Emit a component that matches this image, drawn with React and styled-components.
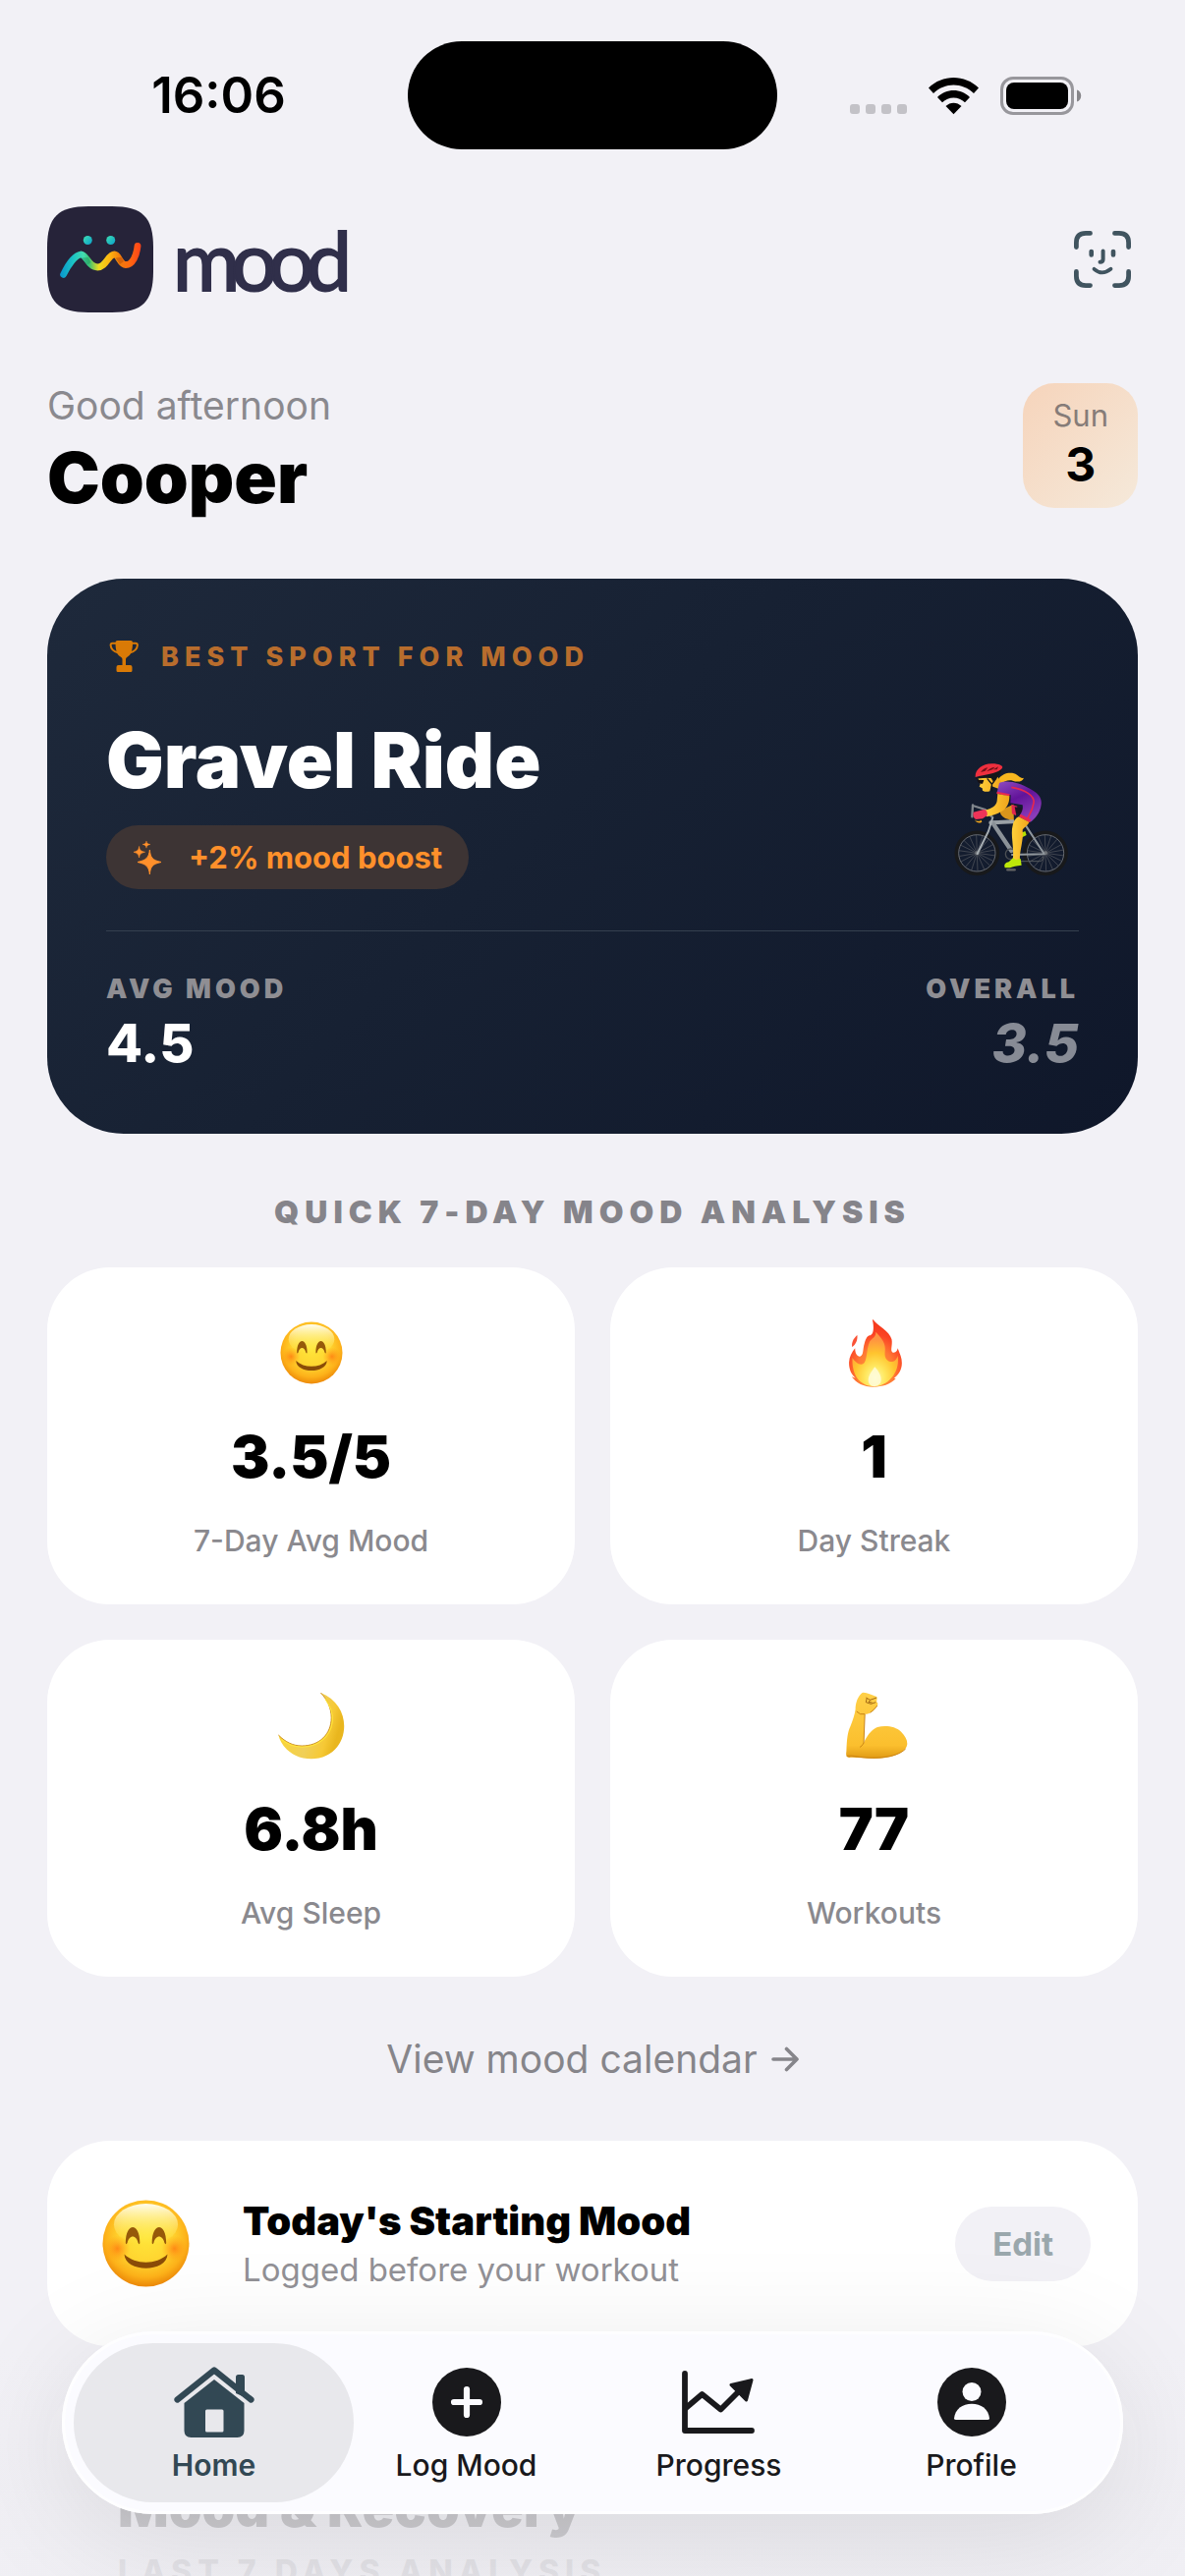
import React from "react";
import styled, { createGlobalStyle } from "styled-components";

const GlobalStyle = createGlobalStyle`
  *, *::before, *::after { box-sizing: border-box; }
  html, body { margin: 0; background: #f2f1f6; }
  body { font-family: Inter, "Liberation Sans", sans-serif; color: #000; }
  button { font: inherit; border: 0; background: none; padding: 0; cursor: pointer; }
  a { text-decoration: none; }
  h1, h2, h3, p, dl, dt, dd { margin: 0; font-weight: inherit; font-size: inherit; }
  svg { display: block; flex: none; }
`;

const Screen = styled.div`
  position: relative;
  height: 100vh;
  overflow: hidden;
  background: #f2f1f6;
`;

const StatusBar = styled.div`
  display: grid;
  grid-template-columns: 1fr 376px 1fr;
  align-items: center;
  padding-top: 42px;
`;

const Clock = styled.time`
  padding-left: 30px;
  text-align: center;
  font-size: 51px;
  line-height: 60px;
  font-weight: 600;
`;

const Island = styled.div`
  height: 110px;
  border-radius: 55px;
  background: #000;
`;

const StatusIcons = styled.div`
  display: flex;
  justify-content: center;
  align-items: center;
  gap: 22px;
  padding-right: 32px;
`;

const Main = styled.main`
  padding: 58px 48px 0;
`;

const TopBar = styled.header`
  display: flex;
  align-items: center;
  justify-content: space-between;
`;

const Brand = styled.div`
  display: flex;
  align-items: center;
  gap: 20px;
`;

const Wordmark = styled.span`
  font-family: Lato, "Liberation Sans", sans-serif;
  font-size: 83px;
  line-height: 108px;
  letter-spacing: -9px;
  color: #302f4a;
  -webkit-text-stroke: 2px #302f4a;
`;

const ScanButton = styled.button`
  display: grid;
  place-items: center;
  width: 72px;
  height: 72px;
`;

const Greeting = styled.section`
  display: flex;
  align-items: flex-start;
  justify-content: space-between;
  margin-top: 72px;
`;

const Hello = styled.p`
  font-size: 39px;
  line-height: 46px;
  color: #8a898e;
  && { margin-bottom: 8px; }
`;

const Name = styled.h1`
  && { font-size: 72px; font-weight: 900; }
  line-height: 84px;
`;

const DateTile = styled.div`
  display: flex;
  flex-direction: column;
  align-items: center;
  padding: 15px 30px;
  border-radius: 32px;
  background: linear-gradient(135deg, #f6d4bb, #f5e9da);
`;

const Weekday = styled.span`
  font-size: 31px;
  line-height: 36px;
  color: #867c78;
`;

const DayNumber = styled.span`
  font-size: 48px;
  line-height: 58px;
  font-weight: 700;
  margin-top: 3px;
`;

const Hero = styled.section`
  margin-top: 61px;
  padding: 60px;
  border-radius: 78px;
  background: linear-gradient(135deg, #1e293b, #172133 45%, #0f172a);
  color: #fff;
`;

const Eyebrow = styled.div`
  display: flex;
  align-items: center;
  gap: 20px;
  height: 38px;
  font-size: 27px;
  font-weight: 800;
  letter-spacing: 6px;
  color: #b86d2d;
`;

const HeroBody = styled.div`
  display: flex;
  justify-content: space-between;
  align-items: flex-end;
  margin-top: 42px;
  padding-bottom: 42px;
  border-bottom: 1px solid #35404f;
`;

const SportName = styled.h2`
  && { font-size: 78px; font-weight: 900; }
  line-height: 90px;
`;

const Boost = styled.div`
  display: inline-flex;
  align-items: center;
  gap: 27px;
  height: 65px;
  margin-top: 21px;
  padding: 0 27px;
  border-radius: 33px;
  background: #3d3434;
  color: #ff902b;
  font-size: 31px;
  font-weight: 700;
`;

const HeroStats = styled.dl`
  && { margin-top: 42px; }
  display: flex;
  justify-content: space-between;
`;

const HeroStat = styled.div`
  text-align: ${(p) => (p.$end ? "right" : "left")};

  dt {
    font-size: 27px;
    line-height: 34px;
    font-weight: 900;
    letter-spacing: 4px;
    color: #8f8e93;
  }

  dd {
    margin-top: 6px;
    font-size: 54px;
    line-height: 64px;
    font-weight: 800;
    font-style: ${(p) => (p.$end ? "italic" : "normal")};
    color: ${(p) => (p.$end ? "#878b95" : "#fff")};
  }
`;

const SectionTitle = styled.h2`
  && { font-size: 32px; font-weight: 900; margin: 60px 0 36px; }
  line-height: 40px;
  letter-spacing: 6px;
  text-align: center;
  color: #85848a;
`;

const StatGrid = styled.div`
  display: grid;
  grid-template-columns: 1fr 1fr;
  gap: 36px;
`;

const StatCard = styled.article`
  display: flex;
  flex-direction: column;
  align-items: center;
  gap: 30px;
  padding: 48px 24px 47px;
  border-radius: 64px;
  background: #fff;
`;

const StatValue = styled.strong`
  font-size: 59px;
  line-height: 74px;
  font-weight: 900;
`;

const StatLabel = styled.span`
  font-size: 30px;
  line-height: 36px;
  font-weight: 500;
  color: #8a898e;
`;

const CalendarLink = styled.a`
  display: flex;
  justify-content: center;
  align-items: center;
  gap: 14px;
  margin: 60px 0;
  font-size: 39px;
  line-height: 47px;
  color: #86858a;
`;

const TodayCard = styled.section`
  display: flex;
  align-items: center;
  gap: 46px;
  padding: 52px 48px;
  border-radius: 64px;
  background: #fff;
`;

const TodayText = styled.div`
  flex: 1;

  h3 {
    font-size: 40px;
    line-height: 50px;
    font-weight: 900;
  }

  p {
    margin-top: 2px;
    font-size: 33px;
    line-height: 44px;
    color: #929196;
  }
`;

const EditButton = styled.button`
  && {
    height: 76px;
    padding: 0 38px;
    border-radius: 38px;
    background: #f2f1f6;
    color: #9aa7ac;
    font-size: 33px;
    font-weight: 700;
  }
`;

const RecoveryCard = styled.section`
  margin-top: 36px;
  padding: 96px 72px;
  border-radius: 64px;
  background: #f5f4f8;

  h3 {
    font-size: 54px;
    line-height: 66px;
    font-weight: 900;
  }

  p {
    margin-top: 12px;
    font-size: 32px;
    line-height: 40px;
    font-weight: 800;
    letter-spacing: 6px;
    color: #8a898e;
  }
`;

const BottomFade = styled.div`
  position: absolute;
  left: 0;
  right: 0;
  bottom: 0;
  height: 230px;
  background: linear-gradient(rgba(240, 239, 244, 0), rgba(240, 239, 244, 0.82) 60%, rgba(240, 239, 244, 0.88));
  pointer-events: none;
`;

const TabBar = styled.nav`
  position: absolute;
  left: 63px;
  right: 63px;
  bottom: 63px;
  display: flex;
  padding: 12px 26px;
  border-radius: 93px;
  background: #fbfbff;
  box-shadow: inset 0 0 0 3px #fefeff, 0 24px 120px rgba(0, 0, 0, 0.1);
`;

const Tab = styled.a`
  flex: 1 1 0;
  display: flex;
  flex-direction: column;
  align-items: center;
  gap: 9px;
  margin: 0 -14px;
  padding: 23px 0 20px;
  border-radius: 81px;
  background: ${(p) => (p.$active ? "#e8e8ec" : "transparent")};
  color: ${(p) => (p.$active ? "#324854" : "#19191c")};
  font-size: 30px;
  line-height: 36px;
  font-weight: ${(p) => (p.$active ? 600 : 500)};
`;

function SignalDots() {
  return (
    <svg width="58" height="39" viewBox="0 0 58 39" aria-hidden="true">
      {[0, 16, 32, 48].map((x) => (
        <rect key={x} x={x} y="28" width="10" height="10" rx="3" fill="#c3c2c7" />
      ))}
    </svg>
  );
}

function WifiIcon() {
  return (
    <svg width="51" height="39" viewBox="0 0 51 39" aria-hidden="true">
      <path d="M0 11.5C14 -2.5 37 -2.5 51 11.5L46 17C34.500 5.500 16.500 5.500 5 17Z" />
      <path d="M9 21C18 11.800 33 11.800 42 21L37 26.300C30.500 19.800 20.500 19.800 14 26.300Z" />
      <path d="M17.500 30C22 25.500 29 25.500 33.500 30L25.500 38.300Z" />
    </svg>
  );
}

function BatteryIcon() {
  return (
    <svg width="83" height="39" viewBox="0 0 83 39" aria-hidden="true">
      <rect x="1.500" y="1.500" width="72" height="36" rx="11.500" fill="none" stroke="#98979c" strokeWidth="3" />
      <rect x="6" y="6" width="63" height="27" rx="8" />
      <path d="M78 13.500c2.700.8 4.200 3 4.200 6s-1.500 5.200-4.200 6Z" fill="#87868a" />
    </svg>
  );
}

function AppIcon() {
  return (
    <svg width="108" height="108" viewBox="0 0 108 108" aria-hidden="true">
      <defs>
        <linearGradient id="wave" gradientUnits="userSpaceOnUse" x1="14" y1="0" x2="94" y2="0">
          <stop offset="0" stopColor="#0a97cc" />
          <stop offset="0.16" stopColor="#1cc4c4" />
          <stop offset="0.29" stopColor="#45dcae" />
          <stop offset="0.36" stopColor="#39c275" />
          <stop offset="0.48" stopColor="#ecdc20" />
          <stop offset="0.62" stopColor="#ffb510" />
          <stop offset="0.75" stopColor="#f07c0c" />
          <stop offset="0.87" stopColor="#ff6a10" />
          <stop offset="1" stopColor="#ff4618" />
        </linearGradient>
        <linearGradient id="dot" x1="0" y1="0" x2="1" y2="1">
          <stop offset="0" stopColor="#3fe0b2" />
          <stop offset="1" stopColor="#0aa0cc" />
        </linearGradient>
      </defs>
      <path d="M42 0H66C97 0 108 11 108 42V66C108 97 97 108 66 108H42C11 108 0 97 0 66V42C0 11 11 0 42 0Z" fill="#262339" />
      <circle cx="41.300" cy="34.500" r="4.500" fill="url(#dot)" />
      <circle cx="64.700" cy="34.500" r="4.500" fill="url(#dot)" />
      <path
        d="M16.600 69.400C21 60 28 50 34.300 49C40 49 42 62 51.200 62C60 62 62 49 68.500 49C73 49 74 59.500 80 59.500C87 59.500 91 50 92 40.500"
        fill="none"
        stroke="url(#wave)"
        strokeWidth="6.800"
        strokeLinecap="round"
      />
      <path d="M35.500 52.600L41.500 52L44.500 57L40.500 60Z" fill="#1f9a62" opacity="0.5" />
      <path d="M69.500 52.600L75.500 52L78 56L74 59Z" fill="#b84a08" opacity="0.5" />
    </svg>
  );
}

function FaceScanIcon() {
  return (
    <svg width="58" height="58" viewBox="0 0 58 58" fill="none" stroke="#40545f" strokeLinecap="round" aria-hidden="true">
      <g strokeWidth="4.800">
        <path d="M2.400 16.500V12Q2.400 2.400 12 2.400H16.500" />
        <path d="M41.500 2.400H46Q55.600 2.400 55.600 12V16.500" />
        <path d="M55.600 41.500V46Q55.600 55.600 46 55.600H41.500" />
        <path d="M16.500 55.600H12Q2.400 55.600 2.400 46V41.500" />
      </g>
      <path strokeWidth="4.600" d="M17.700 21V24.500M40 21V24.500" />
      <path strokeWidth="4" d="M29.600 20.500V29Q29.600 31.800 26.500 31.800" />
      <path strokeWidth="3.800" d="M20.500 38.800Q28.500 46 37.500 38.800" />
    </svg>
  );
}

function TrophyIcon() {
  return (
    <svg width="36" height="32" viewBox="0 0 36 32" fill="#d97a06" aria-hidden="true">
      <path d="M9.500 2Q9.500 0 11.500 0H25Q27 0 27 2C27 10 25.500 14.500 21.500 16.800Q20 17.600 20 19V25H24.500Q26.500 25 26.500 27V30.500Q26.500 32 25 32H12Q10.500 32 10.500 30.500V27Q10.500 25 12.500 25H16.500V19Q16.500 17.600 15 16.800C11 14.500 9.500 10 9.500 2Z" />
      <path d="M10 2.800H6.500Q4.600 2.800 4.600 4.800Q5 10.500 12.500 12.500M26.500 2.800H30Q31.900 2.800 31.900 4.800Q31.500 10.500 24 12.500" fill="none" stroke="#d97a06" strokeWidth="2" />
    </svg>
  );
}

function SparklesIcon() {
  return (
    <svg width="30" height="34" viewBox="0 0 30 34" fill="#ff902b" aria-hidden="true">
      <path d="M17.400 9C18 17 20 19.500 29 21.500C20 23.500 18 26 17.400 34C16.500 26 14 23.500 5 21.500C14 19.500 16.500 17 17.400 9Z" stroke="#ff902b" strokeWidth="1" strokeLinejoin="round" />
      <path d="M6.600 5.500C7 9.500 8.500 10.500 12.500 11.300C8.500 12.100 7 13.500 6.600 17C6.200 13.500 4.500 12.100 1 11.300C4.500 10.500 6.200 9.500 6.600 5.500Z" stroke="#ff902b" strokeWidth="0.600" />
      <path d="M14 0C14.300 2.300 15.200 3 18 3.500C15.200 4 14.300 5 14 7.200C13.700 5 12.700 4 10 3.500C12.700 3 13.700 2.300 14 0Z" stroke="#ff902b" strokeWidth="0.400" />
    </svg>
  );
}

function Wheel({ cx }) {
  const spokes = [8, 26, 44, 66, 88, 108, 130, 152, 170];
  return (
    <g>
      <circle cx={cx} cy="325" r="63" fill="none" stroke="#18191b" strokeWidth="11" />
      <circle cx={cx} cy="325" r="56" fill="none" stroke="#77797d" strokeWidth="2.500" />
      {spokes.map((a) => {
        const r = (a * Math.PI) / 180;
        const dx = 55 * Math.cos(r);
        const dy = 55 * Math.sin(r);
        return <line key={a} x1={cx - dx} y1={325 - dy} x2={cx + dx} y2={325 + dy} stroke="#5f6267" strokeWidth="1.800" />;
      })}
      <circle cx={cx} cy="325" r="6" fill="#6f7378" />
    </g>
  );
}

function CyclistEmoji() {
  return (
    <svg width="140" height="140" viewBox="-6 15 420 420" role="img" aria-label="Cyclist">
      <defs>
        <linearGradient id="suit" x1="0" y1="0" x2="0.5" y2="1">
          <stop offset="0" stopColor="#8f4cc0" />
          <stop offset="0.5" stopColor="#62149a" />
          <stop offset="1" stopColor="#8a3cb8" />
        </linearGradient>
        <linearGradient id="skin" x1="0" y1="0" x2="1" y2="0">
          <stop offset="0" stopColor="#ffd03a" />
          <stop offset="1" stopColor="#f0a51c" />
        </linearGradient>
      </defs>
      <Wheel cx={103} />
      <Wheel cx={312} />
      <path d="M236 264L250 258L254 270L238 278Z" fill="#b5e000" />
      <path d="M172 196L214 176L216 236L200 222Q176 218 172 196Z" fill="#d9951c" />
      <path d="M208 176L226 182L222 210L210 205Z" fill="#e0254f" />
      <path d="M218 184L244 188L240 205L222 205Z" fill="#1a1420" />
      <g fill="none" strokeLinecap="round" strokeLinejoin="round">
        <path d="M210 330L308 328M250 238L306 324" stroke="#8f969c" strokeWidth="6" />
        <path d="M145 232L212 229" stroke="#9aa1a6" strokeWidth="12" />
        <path d="M153 236L208 318" stroke="#8b9298" strokeWidth="13" />
        <path d="M151 216L138 258L104 327" stroke="#a4abb0" strokeWidth="6" />
        <circle cx="206" cy="328" r="16" stroke="#4b4f54" strokeWidth="4" />
        <path d="M212 350H296Q306 348 304 336" stroke="#55595e" strokeWidth="3" />
        <path d="M196 376H218" stroke="#666" strokeWidth="7" />
        <path d="M90 178L88 214M90 180L128 192L148 214" stroke="#80868c" strokeWidth="7" />
      </g>
      <path d="M168 100C180 82 200 78 216 82C230 86 234 99 246 95C242 108 226 109 212 104C198 101 186 106 176 114Z" fill="#f7b71f" />
      <path d="M106 96L166 92L180 112L168 128L146 120L142 136Q130 140 120 134L119 127L110 122L113 114Z" fill="url(#skin)" />
      <path d="M99 96C122 86 160 78 178 68C174 90 160 100 152 106L146 96L128 95L100 98Z" fill="#15171a" />
      <path d="M103 101L124 102L120 113Q110 115 106 108Z" fill="#171012" />
      <path d="M134 97L148 114L149 136M162 96L149 114" fill="none" stroke="#15171a" strokeWidth="4" />
      <path d="M98 93C96 70 120 51 150 52C166 52 180 57 181 63C174 80 136 84 98 93Z" fill="#ee2f3e" />
      <path d="M114 78Q122 66 136 64L128 74ZM132 76Q142 64 158 62L150 70ZM152 70L168 61L164 70Z" fill="#6f1018" />
      <path d="M171 111C196 100 232 110 264 128C288 140 302 156 299 176C296 202 280 220 266 230L232 212C242 198 244 188 242 178L205 172L206 148L164 140Z" fill="url(#suit)" />
      <path d="M208 124C246 130 280 148 276 172C272 196 262 208 256 222" fill="none" stroke="#e6284f" strokeWidth="5" />
      <path d="M164 137L203 145L202 152L163 144ZM236 206L268 223L263 232L231 214Z" fill="#e6284f" />
      <path d="M166 144L202 151C202 170 196 184 184 194C170 204 150 210 132 214L127 194C148 190 162 180 164 166Z" fill="url(#skin)" />
      <path d="M92 200L124 192Q136 194 134 210L120 220L100 222Q88 216 92 200Z" fill="#ef3358" />
      <path d="M95 222Q104 232 116 224L118 230Q104 238 95 222Z" fill="#f0a51c" />
      <path d="M230 214L262 230C258 242 246 246 242 254C246 288 232 316 234 348L212 348C218 310 204 268 212 240Q216 220 230 214Z" fill="url(#skin)" />
      <path d="M213 340L222 346L236 342L239 362Q216 364 204 370H188Q182 356 200 352Z" fill="#bde80a" />
    </svg>
  );
}

function SmileEmoji({ size, scale, id }) {
  const pad = (100 * size) / scale;
  return (
    <svg width={size} height={size} viewBox={`${50 - pad / 2} ${50 - pad / 2} ${pad} ${pad}`} role="img" aria-label="Smiling face">
      <defs>
        <radialGradient id={`${id}-face`} cx="0.5" cy="0.42" r="0.6">
          <stop offset="0" stopColor="#ffe63a" />
          <stop offset="0.5" stopColor="#ffd530" />
          <stop offset="0.78" stopColor="#fdb21a" />
          <stop offset="1" stopColor="#ea8206" />
        </radialGradient>
        <linearGradient id={`${id}-shine`} x1="0" y1="0" x2="0" y2="1">
          <stop offset="0" stopColor="#fffdf0" />
          <stop offset="1" stopColor="#fff04a" stopOpacity="0" />
        </linearGradient>
        <radialGradient id={`${id}-cheek`}>
          <stop offset="0" stopColor="#ff7a10" stopOpacity="0.8" />
          <stop offset="1" stopColor="#ff9a10" stopOpacity="0" />
        </radialGradient>
      </defs>
      <circle cx="50" cy="50" r="50" fill={`url(#${id}-face)`} />
      <ellipse cx="50" cy="28" rx="37" ry="24" fill={`url(#${id}-shine)`} />
      <circle cx="17" cy="56" r="15" fill={`url(#${id}-cheek)`} />
      <circle cx="83" cy="56" r="15" fill={`url(#${id}-cheek)`} />
      <path d="M26.500 49.500C26.500 25 43 25 43 49.500Q42.500 52 41 49.500C39 39.500 30.500 39.500 28.500 49.500Q27 52 26.500 49.500Z" fill="#96590a" />
      <path d="M57 49.500C57 25 73.500 25 73.500 49.500Q73 52 71.500 49.500C69.500 39.500 61 39.500 59 49.500Q57.500 52 57 49.500Z" fill="#96590a" />
      <path d="M25 62.500C38 75 62 75 75 62.500C74 84 26 84 25 62.500Z" fill="#8a4c08" />
    </svg>
  );
}

function FireEmoji() {
  return (
    <svg width="78" height="78" viewBox="643 474 203 234" preserveAspectRatio="none" role="img" aria-label="Fire">
      <defs>
        <radialGradient id="flame" cx="0.5" cy="0.78" r="0.7">
          <stop offset="0" stopColor="#ffa53a" />
          <stop offset="0.5" stopColor="#ff7a34" />
          <stop offset="0.8" stopColor="#fb4424" />
          <stop offset="1" stopColor="#f63a1c" />
        </radialGradient>
        <radialGradient id="core" cx="0.5" cy="0.84" r="0.7">
          <stop offset="0" stopColor="#fff9b0" />
          <stop offset="0.3" stopColor="#ffe860" />
          <stop offset="0.65" stopColor="#ffc42e" />
          <stop offset="1" stopColor="#ff9440" />
        </radialGradient>
      </defs>
      <path
        d="M741 490C752 508 784 524 790 550C793 568 785 586 793 590C801 592 805 585 806 577C812 595 817 606 817 622C817 644 808 658 796 669L801 670C786 688 765 695 742 695C715 695 697 684 684 664L694 668C682 655 677 640 677 620C678 603 684 590 693 577C693 595 700 603 706 602C716 600 713 580 718 562C722 545 727 538 733 538C742 535 744 515 739 490Z"
        fill="url(#flame)"
      />
      <path d="M699 537C692 543 683 556 685 573C693 568 700 555 699 537Z" fill="#fa5236" />
      <path
        d="M748 527C762 545 776 560 772 590C770 612 785 620 792 618C800 616 804 608 806 600C812 640 790 690 744 694C705 692 684 660 686 606C692 618 704 630 714 625C726 618 722 580 732 556C738 545 748 545 748 527Z"
        fill="url(#core)"
      />
      <path d="M745 634C757 648 766 668 760 684Q752 694 744 694Q732 692 729 682C725 664 736 650 745 634Z" fill="#fffce0" opacity="0.8" />
    </svg>
  );
}

function MoonEmoji() {
  return (
    <svg width="78" height="78" viewBox="722 231 203 234" preserveAspectRatio="none" role="img" aria-label="Crescent moon">
      <defs>
        <linearGradient id="moon" x1="0" y1="0" x2="1" y2="0.3">
          <stop offset="0" stopColor="#ffd726" />
          <stop offset="0.6" stopColor="#f0cf58" />
          <stop offset="0.85" stopColor="#f6c935" />
          <stop offset="1" stopColor="#e9b61e" />
        </linearGradient>
      </defs>
      <path
        d="M848 249C890 268 910 310 910 350C910 410 872 451 823 451C780 451 745 420 736 378C755 400 775 411 798 411C845 411 876 375 876 325C876 295 865 270 848 249Z"
        fill="url(#moon)"
      />
      <path d="M848 249C865 270 876 295 876 325C876 375 845 411 798 411C775 411 755 400 736 378" fill="none" stroke="#c98a1a" strokeWidth="2.500" />
      <path d="M860 268C874 290 881 310 879 336C874 385 840 414 798 415C780 414 760 407 744 392" fill="none" stroke="#ffe53a" strokeWidth="3" />
    </svg>
  );
}

function ArmEmoji() {
  return (
    <svg width="78" height="78" viewBox="643 231 203 234" preserveAspectRatio="none" role="img" aria-label="Flexed biceps">
      <defs>
        <linearGradient id="arm" x1="0" y1="0" x2="0" y2="1">
          <stop offset="0" stopColor="#ffd048" />
          <stop offset="0.8" stopColor="#fbbf2e" />
          <stop offset="1" stopColor="#e09a14" />
        </linearGradient>
      </defs>
      <path
        d="M712 249Q718 247 735 254L750 261C753 266 750 272 750 277C756 282 753 290 747 296C738 308 730 314 719 315L716 402C722 385 735 362 752 354C775 348 800 352 815 368C826 382 832 392 831 407C828 430 795 450 743 450C715 449 690 445 677 447C668 446 669 436 670 428C671 400 672 370 681 350C688 330 692 315 694 300C694 280 700 260 712 249Z"
        fill="url(#arm)"
      />
      <path d="M719 315L716 402C712 410 710 412 706 415M697 306Q706 318 719 314M733 310Q745 300 752 288" fill="none" stroke="#c27a10" strokeWidth="2.500" />
      <path d="M671 442Q680 440 700 444C730 450 800 452 827 420" fill="none" stroke="#c98214" strokeWidth="2.500" />
      <path d="M722 264L733 271L750 264M724 266L722 278L735 283L748 278M733 271L729 277L738 279" fill="none" stroke="#8a4f08" strokeWidth="2.200" />
    </svg>
  );
}

function ArrowIcon() {
  return (
    <svg width="28" height="28" viewBox="0 0 28 28" fill="none" stroke="#86858a" strokeWidth="3.600" strokeLinecap="round" strokeLinejoin="round" aria-hidden="true">
      <path d="M2 14H26M15.500 3.500L26 14L15.500 24.500" />
    </svg>
  );
}

function HomeIcon() {
  return (
    <svg width="84" height="74" viewBox="0 0 84 74" aria-hidden="true">
      <g transform="translate(0.500 0)">
        <path d="M63.500 28V11.500Q63.500 9 66 9H70Q72.500 9 72.500 11.500V32Z" fill="#324854" />
        <path d="M4 34.500L41.500 4.500L79 34.500" fill="none" stroke="#324854" strokeWidth="6.200" strokeLinecap="round" strokeLinejoin="round" />
        <path d="M41.500 14L72 38V66Q72 73 65 73H18Q11 73 11 66V38Z" fill="#324854" />
        <rect x="32.500" y="44.500" width="18.500" height="23" rx="1.500" fill="#e8e8ec" />
      </g>
    </svg>
  );
}

function PlusIcon() {
  return (
    <svg width="84" height="74" viewBox="0 0 84 74" aria-hidden="true">
      <circle cx="42" cy="37" r="35" fill="#19191c" />
      <path d="M29 37H55M42 24V50" stroke="#fbfbff" strokeWidth="6.200" strokeLinecap="round" />
    </svg>
  );
}

function ChartIcon() {
  return (
    <svg width="84" height="74" viewBox="0 0 84 74" fill="none" stroke="#19191c" strokeWidth="5.800" strokeLinecap="round" strokeLinejoin="round" aria-hidden="true">
      <path d="M7 8V66H75" />
      <path d="M8 43L24.500 29L43.500 44.500L65 23" />
      <path d="M75 14.500L54 19.500L69.500 35Z" fill="#19191c" strokeWidth="3" />
    </svg>
  );
}

function ProfileIcon() {
  return (
    <svg width="84" height="74" viewBox="0 0 84 74" aria-hidden="true">
      <circle cx="42" cy="37" r="35" fill="#19191c" />
      <circle cx="42" cy="26.500" r="9.500" fill="#fbfbff" />
      <path d="M24 53.500C25 44 32.500 38.700 42 38.700S59 44 60 53.500Q60 55 58 55H26Q24 55 24 53.500Z" fill="#fbfbff" />
    </svg>
  );
}

const stats = [
  { icon: <SmileEmoji size={78} scale={63} id="avg" />, value: "3.5/5", label: "7-Day Avg Mood" },
  { icon: <FireEmoji />, value: "1", label: "Day Streak" },
  { icon: <MoonEmoji />, value: "6.8h", label: "Avg Sleep" },
  { icon: <ArmEmoji />, value: "77", label: "Workouts" },
];

const tabs = [
  { label: "Home", icon: <HomeIcon />, active: true },
  { label: "Log Mood", icon: <PlusIcon /> },
  { label: "Progress", icon: <ChartIcon /> },
  { label: "Profile", icon: <ProfileIcon /> },
];

export default function App() {
  return (
    <Screen>
      <GlobalStyle />
      <StatusBar>
        <Clock>16:06</Clock>
        <Island />
        <StatusIcons>
          <SignalDots />
          <WifiIcon />
          <BatteryIcon />
        </StatusIcons>
      </StatusBar>

      <Main>
        <TopBar>
          <Brand>
            <AppIcon />
            <Wordmark>mood</Wordmark>
          </Brand>
          <ScanButton aria-label="Scan face">
            <FaceScanIcon />
          </ScanButton>
        </TopBar>

        <Greeting>
          <div>
            <Hello>Good afternoon</Hello>
            <Name>Cooper</Name>
          </div>
          <DateTile>
            <Weekday>Sun</Weekday>
            <DayNumber>3</DayNumber>
          </DateTile>
        </Greeting>

        <Hero>
          <Eyebrow>
            <TrophyIcon />
            BEST SPORT FOR MOOD
          </Eyebrow>
          <HeroBody>
            <div>
              <SportName>Gravel Ride</SportName>
              <Boost>
                <SparklesIcon />
                +2% mood boost
              </Boost>
            </div>
            <CyclistEmoji />
          </HeroBody>
          <HeroStats>
            <HeroStat>
              <dt>AVG MOOD</dt>
              <dd>4.5</dd>
            </HeroStat>
            <HeroStat $end>
              <dt>OVERALL</dt>
              <dd>3.5</dd>
            </HeroStat>
          </HeroStats>
        </Hero>

        <SectionTitle>QUICK 7-DAY MOOD ANALYSIS</SectionTitle>
        <StatGrid>
          {stats.map((s) => (
            <StatCard key={s.label}>
              {s.icon}
              <StatValue>{s.value}</StatValue>
              <StatLabel>{s.label}</StatLabel>
            </StatCard>
          ))}
        </StatGrid>

        <CalendarLink href="#calendar">
          View mood calendar
          <ArrowIcon />
        </CalendarLink>

        <TodayCard>
          <SmileEmoji size={105} scale={88} id="today" />
          <TodayText>
            <h3>Today's Starting Mood</h3>
            <p>Logged before your workout</p>
          </TodayText>
          <EditButton>Edit</EditButton>
        </TodayCard>

        <RecoveryCard>
          <h3>Mood &amp; Recovery</h3>
          <p>LAST 7 DAYS ANALYSIS</p>
        </RecoveryCard>
      </Main>

      <BottomFade />
      <TabBar aria-label="Main">
        {tabs.map((t) => (
          <Tab key={t.label} href="#" $active={t.active} aria-current={t.active ? "page" : undefined}>
            {t.icon}
            {t.label}
          </Tab>
        ))}
      </TabBar>
    </Screen>
  );
}
